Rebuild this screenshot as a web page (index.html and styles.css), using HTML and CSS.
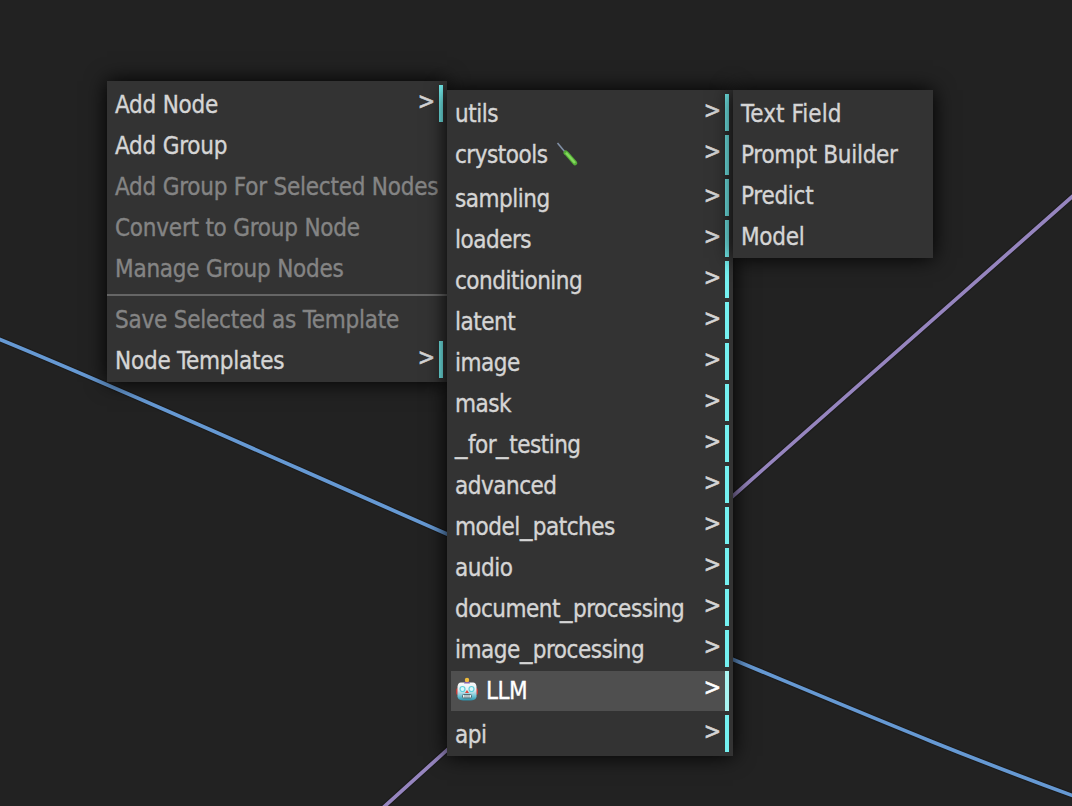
FILE: index.html
```html
<!DOCTYPE html>
<html lang="en">
<head>
<meta charset="utf-8">
<title>Node menu</title>
<link rel="stylesheet" href="styles.css">
</head>
<body>
<main class="canvas">
<svg class="links" width="1072" height="806" viewBox="0 0 1072 806" aria-hidden="true">
<path class="link under" d="M-10 335.500C110 384 280 461 447 534C542 575.500 638 620 733 659.500C850 708 965 757 1082 799"/>
<path class="link blue" d="M-10 335.500C110 384 280 461 447 534C542 575.500 638 620 733 659.500C850 708 965 757 1082 799"/>
<path class="link under" d="M375 815L447 750L733 496L1082 188"/>
<path class="link purple" d="M375 815L447 750L733 496L1082 188"/>
</svg>
<nav class="menu root">
<div class="item sub"><span class="label">Add Node</span><span class="arrow">&gt;</span></div>
<div class="item"><span class="label">Add Group</span></div>
<div class="item off"><span class="label">Add Group For Selected Nodes</span></div>
<div class="item off"><span class="label">Convert to Group Node</span></div>
<div class="item off"><span class="label">Manage Group Nodes</span></div>
<div class="separator"></div>
<div class="item off"><span class="label">Save Selected as Template</span></div>
<div class="item sub"><span class="label">Node Templates</span><span class="arrow">&gt;</span></div>
</nav>
<nav class="menu categories">
<div class="item sub"><span class="label">utils</span><span class="arrow">&gt;</span></div>
<div class="item sub tall"><span class="label">crystools</span><svg class="tool" width="24" height="26" viewBox="0 0 24 26"><path d="M2.500 2L10 11" stroke="#8190a6" stroke-width="1.600"/><path d="M10.700 11.700L12 12.800L20 22" stroke="#55ad38" stroke-width="4.600" stroke-linecap="round"/><path d="M11 11.800L20 22" stroke="#83d95c" stroke-width="2.400"/></svg><span class="arrow">&gt;</span></div>
<div class="item sub"><span class="label">sampling</span><span class="arrow">&gt;</span></div>
<div class="item sub"><span class="label">loaders</span><span class="arrow">&gt;</span></div>
<div class="item sub"><span class="label">conditioning</span><span class="arrow">&gt;</span></div>
<div class="item sub"><span class="label">latent</span><span class="arrow">&gt;</span></div>
<div class="item sub"><span class="label">image</span><span class="arrow">&gt;</span></div>
<div class="item sub"><span class="label">mask</span><span class="arrow">&gt;</span></div>
<div class="item sub"><span class="label"><span class="bar">_</span>for<span class="bar">_</span>testing</span><span class="arrow">&gt;</span></div>
<div class="item sub"><span class="label">advanced</span><span class="arrow">&gt;</span></div>
<div class="item sub"><span class="label">model<span class="bar">_</span>patches</span><span class="arrow">&gt;</span></div>
<div class="item sub"><span class="label">audio</span><span class="arrow">&gt;</span></div>
<div class="item sub"><span class="label">document<span class="bar">_</span>processing</span><span class="arrow">&gt;</span></div>
<div class="item sub"><span class="label">image<span class="bar">_</span>processing</span><span class="arrow">&gt;</span></div>
<div class="item sub tall active"><svg class="robot" width="24" height="26" viewBox="0 0 24 26"><defs><linearGradient id="face" x2="0" y2="1"><stop offset="0" stop-color="#fafafa"/><stop offset=".4" stop-color="#e4eef2"/><stop offset=".75" stop-color="#6fc3d6"/><stop offset="1" stop-color="#2b91ab"/></linearGradient></defs><rect x="1" y="11" width="22" height="7" rx="2" fill="#c43b38"/><path d="M6 5.500h12q3 0 3.500 4v7q1 7-5.500 7H8q-6.500 0-5.500-7v-7q.5-4 3.500-4z" fill="url(#face)"/><path d="M9 6.500h6l-1.500-3h-3z" fill="#8060b4"/><circle cx="12" cy="3" r="2.200" fill="#f1bd3b"/><circle cx="7.500" cy="12" r="2.500" fill="#d8f7fa" stroke="#61cfdc" stroke-width="1.200"/><circle cx="16.500" cy="12" r="2.500" fill="#d8f7fa" stroke="#61cfdc" stroke-width="1.200"/><path d="M12 13l2 3h-4z" fill="#e0483f"/><rect x="7.500" y="17.500" width="9" height="3.500" rx="1" fill="#e8f1f2" stroke="#4f6f78"/><path d="M10 18v3M12 18v3M14 18v3" stroke="#4f6f78" stroke-width=".7"/></svg><span class="label">LLM</span><span class="arrow">&gt;</span></div>
<div class="item sub"><span class="label">api</span><span class="arrow">&gt;</span></div>
</nav>
<nav class="menu nodes">
<div class="item"><span class="label spaced">Text Field</span></div>
<div class="item"><span class="label">Prompt Builder</span></div>
<div class="item"><span class="label">Predict</span></div>
<div class="item"><span class="label">Model</span></div>
</nav>
</main>
</body>
</html>
```
FILE: styles.css
```css
body { margin: 0; background: #212121; }
.canvas { position: relative; width: 1072px; height: 806px; overflow: hidden; background: #222; }
.links { display: block; }
.link { fill: none; stroke-width: 3.7; }
.under { stroke: #181818; stroke-width: 6; opacity: .6; }
.blue { stroke: #6699d3; }
.purple { stroke: #9685bf; }
.menu {
  position: absolute;
  box-sizing: border-box;
  display: flex;
  flex-direction: column;
  gap: 4px;
  padding: 4px;
  background: #333;
  box-shadow: 0 0 20px #000;
  color: #d5d5d5;
  font: 24px/37px Tahoma, "DejaVu Sans Condensed", "DejaVu Sans", sans-serif;
  font-stretch: condensed;
  white-space: pre;
  -webkit-text-stroke: .35px currentColor;
}
.root { left: 107px; top: 81px; width: 340px; letter-spacing: -.23px; }
.categories { left: 447px; top: 90px; width: 286px; letter-spacing: -.5px; }
.nodes { left: 733px; top: 90px; width: 200px; letter-spacing: -.28px; }
.item { display: flex; box-sizing: border-box; height: 37px; padding-left: 4px; }
.label { padding-top: 2px; }
.spaced { letter-spacing: .08px; }
.bar { display: inline-block; width: 13px; transform: scaleX(1.15); transform-origin: left; }
.sub { border-right: 4px solid #74f0f0; }
.tall { height: 40px; }
.off { color: #848484; }
.arrow { margin-left: auto; padding-right: 4px; line-height: 32px; letter-spacing: 0; font-size: 23px; -webkit-text-stroke-width: .6px; }
.separator { height: 2px; margin: 4px -4px 0; background: #666; }
.active { background: #4f4f4f; color: #fff; border-color: #a9f5f2; }
.tool { margin: 6px 0 0 8px; }
.robot { margin: 6px 7px 0 0; }
```
